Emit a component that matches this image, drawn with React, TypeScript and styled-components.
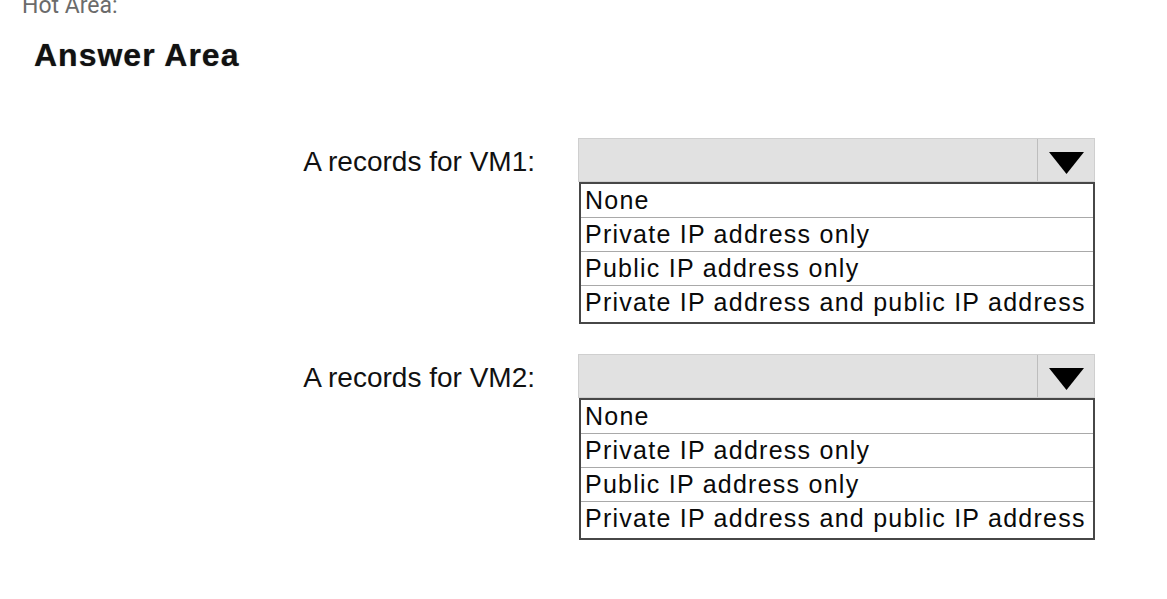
import React from "react";
import styled, { createGlobalStyle } from "styled-components";

const GlobalStyle = createGlobalStyle`
  html, body {
    margin: 0;
    padding: 0;
    background: #ffffff;
    overflow: hidden;
  }
  body {
    font-family: "Liberation Sans", Arial, sans-serif;
  }
`;

const Page = styled.div`
  width: 1167px;
  height: 599px;
  overflow: hidden;
  display: flex;
  flex-direction: column;
`;

const HotArea = styled.div`
  font-family: Roboto, "Noto Sans", sans-serif;
  font-size: 23px;
  line-height: 26px;
  color: #6b6b6b;
  margin: -7px 0 0 22px;
`;

const Heading = styled.h2`
  margin: 18px 0 0 34px;
  font-family: "Liberation Sans", Arial, sans-serif;
  font-weight: bold;
  font-size: 32px;
  letter-spacing: 1px;
  line-height: 37px;
  color: #111;
  text-shadow: 0 0 1px rgba(0, 0, 0, 0.5);
`;

const Questions = styled.div`
  display: flex;
  flex-direction: column;
  gap: 30px;
  margin-top: 64px;
`;

const QuestionRow = styled.div`
  display: flex;
  align-items: flex-start;
  gap: 43px;
`;

const Label = styled.div`
  width: 535px;
  text-align: right;
  font-size: 28px;
  line-height: 32px;
  margin-top: 8px;
  color: #111;
`;

const Dropdown = styled.div`
  width: 517px;
  display: flex;
  flex-direction: column;
`;

const Header = styled.div`
  height: 44px;
  box-sizing: border-box;
  background: #e1e1e1;
  border: 1px solid #cfcfcf;
  display: flex;
  justify-content: flex-end;
`;

const ArrowCell = styled.div`
  width: 57px;
  border-left: 1px solid #bdbdbd;
  display: flex;
  align-items: center;
  justify-content: center;
  padding-top: 5px;
  box-sizing: border-box;
`;

const List = styled.div`
  margin-left: 1px;
  border: 2px solid #474747;
  background: #fff;
  display: flex;
  flex-direction: column;
`;

const Option = styled.div<{ $last?: boolean }>`
  height: ${(p) => (p.$last ? "36px" : "34px")};
  box-sizing: border-box;
  border-bottom: ${(p) => (p.$last ? "none" : "1px solid #a9a9a9")};
  padding: 2px 0 0 4px;
  font-size: 25px;
  letter-spacing: 1.25px;
  line-height: 29px;
  color: #0a0a0a;
  white-space: nowrap;
`;

const options = [
  "None",
  "Private IP address only",
  "Public IP address only",
  "Private IP address and public IP address",
];

const Arrow = () => (
  <svg width="35" height="22" viewBox="0 0 35 22" aria-hidden="true">
    <polygon points="0,0 35,0 17.5,22" fill="#000" />
  </svg>
);

const Question = ({ label }: { label: string }) => (
  <QuestionRow>
    <Label>{label}</Label>
    <Dropdown>
      <Header>
        <ArrowCell>
          <Arrow />
        </ArrowCell>
      </Header>
      <List>
        {options.map((o, i) => (
          <Option key={o} $last={i === options.length - 1}>
            {o}
          </Option>
        ))}
      </List>
    </Dropdown>
  </QuestionRow>
);

export default function App() {
  return (
    <>
      <GlobalStyle />
      <Page>
        <HotArea>Hot Area:</HotArea>
        <Heading>Answer Area</Heading>
        <Questions>
          <Question label="A records for VM1:" />
          <Question label="A records for VM2:" />
        </Questions>
      </Page>
    </>
  );
}
